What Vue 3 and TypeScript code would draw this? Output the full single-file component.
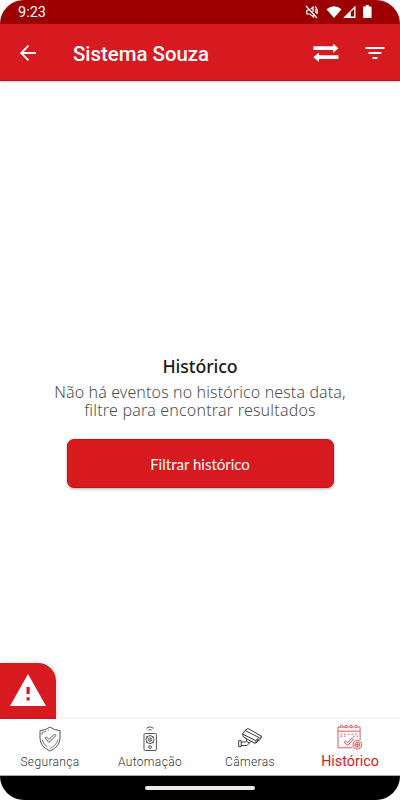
<script setup lang="ts">
interface Tab {
  id: string
  label: string
}

const tabs: Tab[] = [
  { id: 'security', label: 'Segurança' },
  { id: 'automation', label: 'Automação' },
  { id: 'cameras', label: 'Câmeras' },
  { id: 'history', label: 'Histórico' },
]
const active = 'history'
</script>

<template>
  <div class="phone">
    <div class="status">
      <span class="clock">9:23</span>
      <svg class="status-icons" viewBox="0 0 72 18" width="72" height="18">
        <g fill="none" stroke="#fff" stroke-width="1.2">
          <path d="M2 3l11 12M2.800 7v4h3L9.500 14V11M6.600 6.200L9 4v5M11 6.200q1.500 1.500.8 4M11 3.500q3.500 3 1.900 7.500M3 7h2.500l6 6" />
        </g>
        <path fill="#fff" d="M22.500 6.200Q30 .2 37.500 6.200L30 15z" />
        <path fill="#fff" d="M51.500 2.600V15H39.100z" />
        <path fill="#9c0000" d="M50.100 6V13.600H46.800V9z" />
        <path fill="#fff" d="M59.800 3.500h2V2h3v1.500h2q.8 0 .8.8V14.200q0 .8-.8.8h-7q-.8 0-.8-.8V4.300q0-.8.8-.8z" />
      </svg>
    </div>

    <header class="toolbar">
      <svg class="back" viewBox="0 0 18 18" width="18" height="18">
        <path d="M17 9H2.500M9.500 1.700L2.200 9L9.500 16.300" fill="none" stroke="#fff" stroke-width="1.900" />
      </svg>
      <h1>Sistema Souza</h1>
      <svg class="swap" viewBox="0 0 26 20" width="26" height="20">
        <path fill="#fff" d="M.3 3.200H20V.5L25.500 5.200L20 9.900V7H.3zM25.500 12.200H6V9.500L.3 14.200L6 18.900V16H25.500z" />
      </svg>
      <svg class="filter" viewBox="0 0 20 14" width="20" height="14">
        <path fill="#fff" d="M.5 1h19v2H.5zM3.600 6h12.800v2H3.600zM7.500 11h5v2h-5z" />
      </svg>
    </header>

    <main class="content">
      <h2>Histórico</h2>
      <p><span class="line first">Não há eventos no histórico nesta data,</span><span class="line second">filtre para encontrar resultados</span></p>
      <button type="button">Filtrar histórico</button>
      <div class="alert">
        <svg viewBox="0 0 36 32" width="36" height="32">
          <path fill="#fff" fill-rule="evenodd" d="M18 0L36 32H0zM16.500 13V20H19.700V13zM16.500 23.200V26.600H19.700V23.200z" />
        </svg>
      </div>
    </main>

    <nav class="tabs">
      <a v-for="tab in tabs" :key="tab.id" class="tab" :class="[tab.id, { active: tab.id === active }]">
        <svg v-if="tab.id === 'security'" viewBox="0 0 24 26" width="24" height="26">
          <g fill="none" stroke="#444" stroke-width=".9" stroke-linejoin="round">
            <path d="M12 1Q16.500 4.500 22 4.500V12Q22 20.500 12 25Q2 20.500 2 12V4.500Q7.500 4.500 12 1z" />
            <path d="M4 9V6.300Q6.500 6 8.500 5M10 4.300l1-.5M4.200 14Q5.500 18.500 9.500 21M12 22.500Q18.500 19.500 20 13.500" stroke-width=".7" />
            <path d="M7 12.300L8.500 11L11 13.500L16.500 8L18 9.500L11 16.400z" />
          </g>
        </svg>
        <svg v-else-if="tab.id === 'automation'" viewBox="0 0 24 26" width="24" height="26">
          <g fill="none" stroke="#444" stroke-width=".9">
            <rect x="6" y="7.500" width="12.400" height="17" rx="1.300" />
            <circle cx="12" cy="13.600" r="4" />
            <circle cx="12" cy="13.600" r="1.700" />
            <circle cx="12" cy="21" r="1.400" />
            <path d="M8.500 2.300Q12 -.7 15.700 2.300M10.300 4.200Q12 2.700 13.700 4.200M8.200 10.500l1.300 1M15.800 10.500l-1.300 1M8.200 17l1.300-1M15.800 17l-1.300-1M12 12.800v1.800" />
          </g>
        </svg>
        <svg v-else-if="tab.id === 'cameras'" viewBox="0 0 26 26" width="26" height="26">
          <g fill="none" stroke="#333" stroke-width=".95" stroke-linejoin="round">
            <path d="M8 4.500L11 2.500L24.500 10.200L19.500 15L5.500 8z" />
            <path d="M8 4.500L22 11.500M5.500 8L6.400 11L17.500 17.200L19.500 15M24.500 10.200l-.8 2.800L19 17h-1.500M9.600 13v2.600l2.700 1.200 3-2M9.600 15L8.500 16H4.200M4.200 19.500H10l2.500-2.700" />
            <rect x="1.700" y="14.700" width="2.500" height="6" />
            <circle cx="20.500" cy="13.800" r=".8" />
          </g>
        </svg>
        <svg v-else viewBox="0 0 26 26" width="26" height="26">
          <g fill="none" stroke="#d9434a" stroke-width=".9">
            <path d="M3.500 3H1V23.800h14.500M20.700 3h2.400v13M1.300 7.200H23M5.700 3h2.100M10.200 3h2.100M14.700 3h2.100" />
            <circle cx="4.500" cy="2.500" r="1.300" /><circle cx="9" cy="2.500" r="1.300" />
            <circle cx="14" cy="2.500" r="1.300" /><circle cx="19" cy="2.500" r="1.300" />
            <path d="M3.500 10.200H21M3.500 12.200H9M16 12.200H21" stroke-dasharray="1.600 2" />
            <path d="M7 18.300L8.700 17L10.600 18.700L15.200 13.800L16.600 15.200L10.600 21.400z" />
            <circle cx="20.300" cy="20.800" r="4.400" />
            <circle cx="20.300" cy="20.800" r="2.500" />
            <path d="M20.300 18.600V23M18.100 20.800H22.500" />
          </g>
        </svg>
        <span>{{ tab.label }}</span>
      </a>
    </nav>
    <footer class="gesture"><div class="handle"></div></footer>
  </div>
</template>

<style>
body {
  margin: 0;
  background: #fff;
}
</style>

<style scoped>
.phone {
  display: flex;
  flex-direction: column;
  width: 400px;
  height: 800px;
  border-radius: 24px;
  overflow: hidden;
  background: #fff;
  font-family: Roboto, sans-serif;
}
.status {
  display: flex;
  justify-content: space-between;
  align-items: center;
  height: 24px;
  padding: 0 24px 0 18px;
  background: #9c0000;
  box-sizing: border-box;
}
.clock {
  padding-top: 2px;
  color: #fff;
  font-size: 14.5px;
  line-height: 24px;
}
.toolbar {
  display: flex;
  align-items: center;
  height: 57px;
  flex: none;
  box-sizing: border-box;
  padding: 1px 15px 0 19px;
  background: #d71920;
  border-bottom: 1px solid #c80c12;
  box-shadow: 0 1px 2px #0003;
  position: relative;
}
h1 {
  margin: 3px auto 0 36px;
  color: #fff;
  font-size: 20.400px;
  font-weight: 500;
  line-height: 28px;
  white-space: nowrap;
}
.swap {
  margin: 1px 26px 0 0;
}
.content {
  flex: 1;
  display: flex;
  flex-direction: column;
  align-items: center;
  position: relative;
  padding-top: 272px;
  box-sizing: border-box;
}
h2 {
  margin: 0;
  color: #1a1a1a;
  font: 500 17.700px/26px "Noto Sans", sans-serif;
  letter-spacing: -.1px;
  white-space: nowrap;
}
p {
  margin: 4px 0 0;
  color: #505050;
  font: 300 16px/18px "Noto Sans", sans-serif;
  letter-spacing: .12px;
  text-align: center;
}
.line {
  display: block;
  white-space: nowrap;
}
.second {
  letter-spacing: .2px;
}
button {
  margin: 20px 0 0;
  padding: 0;
  width: 267px;
  height: 49px;
  border: 1px solid #d00c14;
  border-radius: 7px;
  background: #d71920;
  box-shadow: 0 1px 3px #0005;
  color: #fff;
  font: 400 15px/20px Lato, sans-serif;
}
.alert {
  position: absolute;
  left: 0;
  bottom: 0;
  display: flex;
  align-items: flex-start;
  width: 56px;
  height: 56px;
  box-sizing: border-box;
  padding: 11px 0 0 10px;
  border-radius: 0 18px 0 0;
  background: #d71920;
  box-shadow: 1px 1px 7px #0002;
}
.tabs {
  display: grid;
  grid-template-columns: repeat(4, 1fr);
  height: 56px;
  flex: none;
  background: #fff;
  box-shadow: 0 -1px 2px #0001;
  position: relative;
}
.tab {
  display: flex;
  flex-direction: column;
  align-items: center;
  padding-top: 7px;
  color: #333;
  font-size: 12px;
  font-weight: 300;
  line-height: 16px;
  letter-spacing: .35px;
}
.tab span {
  margin-top: 2px;
}
.tab.active {
  padding-top: 5px;
  color: #d71920;
  font-size: 14.300px;
  font-weight: 400;
  letter-spacing: 0;
}
.tab.active span {
  margin-top: 3px;
}
.gesture {
  display: flex;
  justify-content: center;
  align-items: center;
  height: 25px;
  flex: none;
  border-top: 1px solid #aaa;
  box-sizing: border-box;
  background: #000;
}
.handle {
  width: 110px;
  height: 4px;
  border-radius: 2px;
  background: #eee8ec;
}
</style>
